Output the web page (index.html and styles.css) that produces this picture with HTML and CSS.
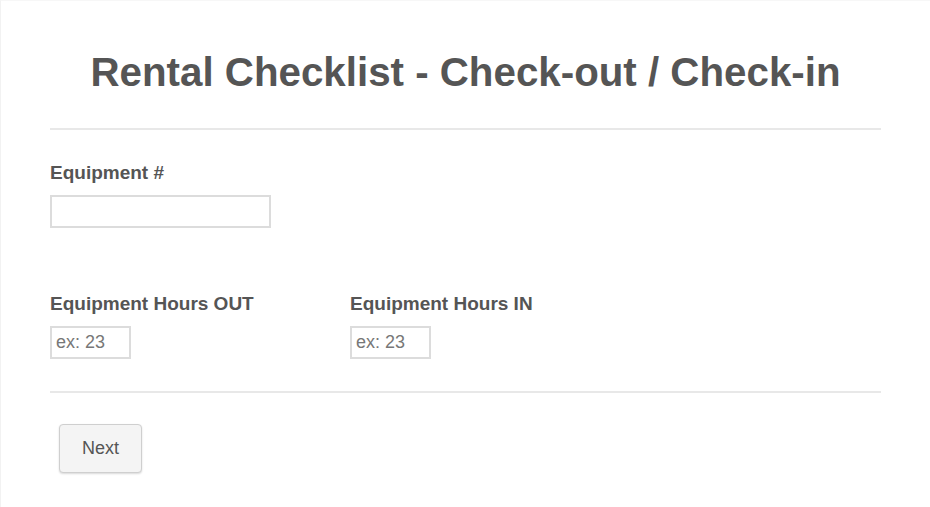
FILE: index.html
```html
<!DOCTYPE html>
<html lang="en">

<head>
  <meta charset="UTF-8">
  <meta name="viewport" content="width=device-width, initial-scale=1.0">
  <title>Rental Checklist</title>

  <!-- styles -->
  <link rel="stylesheet" href="styles.css">
</head>

<body>
  <div class="form-page">
    <header class="form-header">
      <h1>Rental Checklist - Check-out / Check-in</h1>
    </header>

    <div class="field">
      <label for="equipment">Equipment #</label>
      <input type="text" id="equipment" class="input-wide">
    </div>

    <div class="row">
      <div class="field col">
        <label for="hours-out">Equipment Hours OUT</label>
        <input type="text" id="hours-out" class="input-small" placeholder="ex: 23">
      </div>
      <div class="field col">
        <label for="hours-in">Equipment Hours IN</label>
        <input type="text" id="hours-in" class="input-small" placeholder="ex: 23">
      </div>
    </div>

    <div class="actions">
      <button type="button" class="btn-next">Next</button>
    </div>
  </div>
</body>

</html>
```

FILE: styles.css
```css
* {
  margin: 0;
  padding: 0;
  box-sizing: border-box;
  font-family: "Liberation Sans", Arial, sans-serif;
}

body {
  background-color: #fff;
  color: #555;
}

.form-page {
  width: 930px;
  min-height: 507px;
  border-left: 1px solid #f2f2f2;
  border-top: 1px solid #f7f7f7;
  padding: 0 49px;
}

.form-header {
  padding: 48px 0 31px;
  border-bottom: 2px solid #e8e8e8;
  text-align: center;
}

.form-header h1 {
  font-size: 40.3px;
  font-weight: bold;
  line-height: 48px;
  color: #555;
}

.field {
  display: flex;
  flex-direction: column;
  align-items: flex-start;
}

.field label {
  font-size: 19px;
  font-weight: bold;
  line-height: 22px;
  color: #555;
  margin-bottom: 11px;
}

.form-page > .field {
  margin-top: 32px;
}

.row {
  display: flex;
  margin-top: 65px;
  padding-bottom: 32px;
  border-bottom: 2px solid #e8e8e8;
}

.row .col {
  width: 300px;
}

input {
  height: 33px;
  border: 2px solid #dcdcdc;
  background-color: #fff;
  font-size: 18px;
  color: #555;
  padding: 0 4px;
  outline: none;
}

input::placeholder {
  color: #777;
}

.input-wide {
  width: 221px;
}

.input-small {
  width: 81px;
}

.actions {
  padding: 31px 9px;
}

.btn-next {
  width: 83px;
  height: 49px;
  background-color: #f4f4f4;
  border: 1px solid #cfcfcf;
  border-radius: 4px;
  box-shadow: 0 1px 2px rgba(0, 0, 0, 0.15);
  font-size: 18px;
  color: #555;
  cursor: pointer;
}
```
